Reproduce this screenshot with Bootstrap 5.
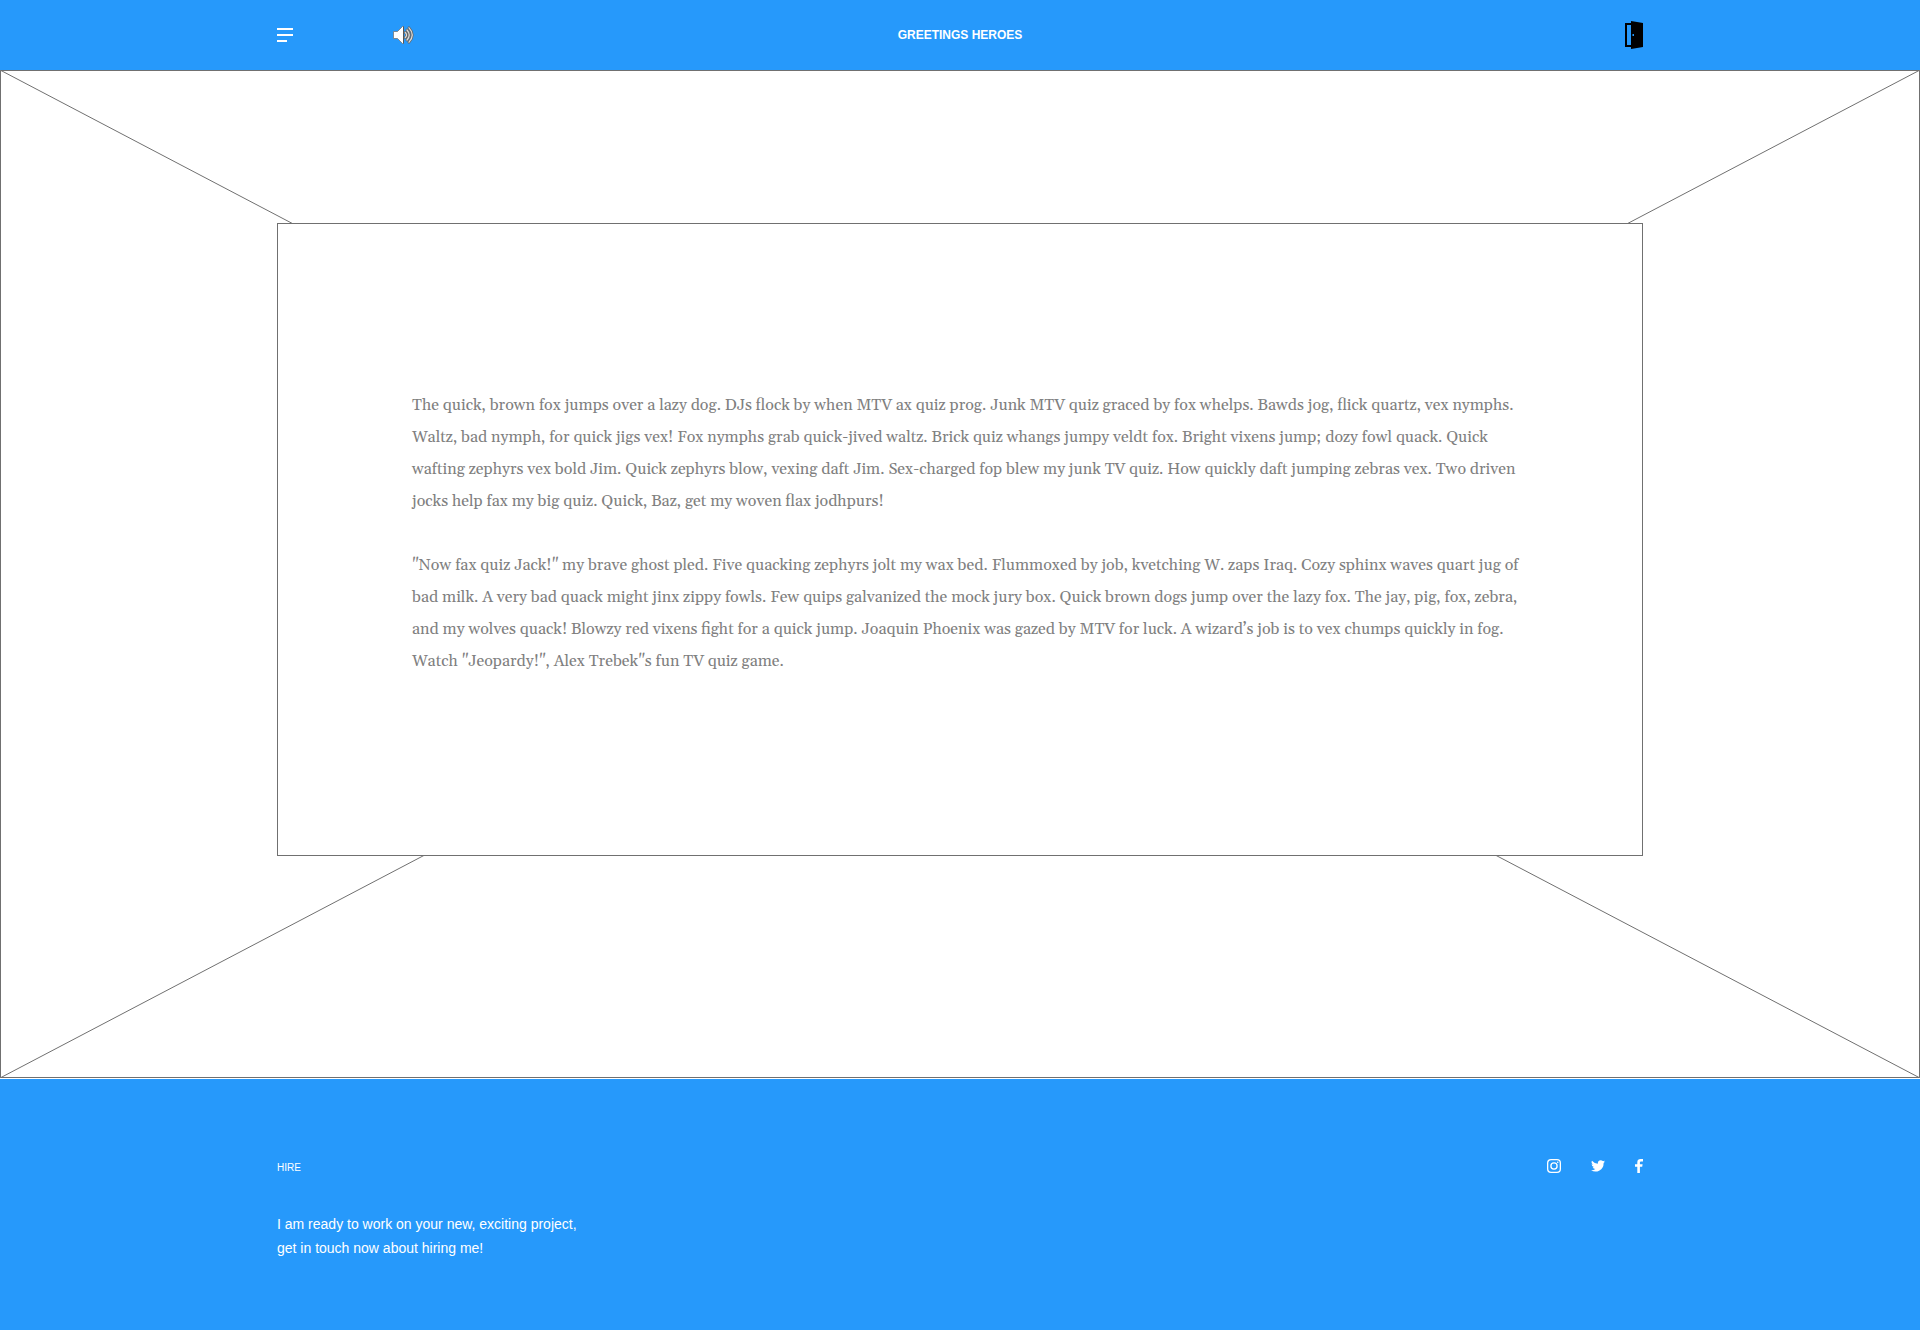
<!DOCTYPE html>
<html lang="en">
<head>
<meta charset="utf-8">
<meta name="viewport" content="width=device-width, initial-scale=1">
<title>Greetings Heroes</title>
<link href="https://cdn.jsdelivr.net/npm/bootstrap@5.3.0/dist/css/bootstrap.min.css" rel="stylesheet">
<style>
  body { font-family: "Liberation Sans", Arial, sans-serif; background: #fff; }
  .brand-blue { background: #2699fb; color: #fff; }
  .page-inner { width: 1366px; }
  .top-bar { height: 70px; }
  .top-title { font-size: 12px; font-weight: 700; line-height: 14px; }
  .side-slot { flex: 1 1 0; }
  .sound-icon { margin-left: 99px; }
  .stage { height: 1009px; }
  .stage-lines { width: 1920px; height: 1008px; }
  .panel { height: 633px; margin-top: 153px; background: #fff; border: 1px solid #707070; padding: 165px 0 0 134px; }
  .copy { font-family: Gelasio, Georgia, "Liberation Serif", serif; font-size: 16px; line-height: 32px; color: #808080; }
  .copy p { margin: 0 0 32px; }
  .copy span { display: table; white-space: nowrap; }
  .foot { height: 251px; padding-top: 77px; }
  .hire { font-size: 10px; line-height: 20px; padding-top: 2px; }
  .pitch { font-size: 14px; line-height: 24px; margin-top: 34px; }
  .socials { height: 20px; gap: 30px; }
</style>
</head>
<body>
<header class="top-bar brand-blue">
  <div class="page-inner h-100 mx-auto d-flex align-items-center">
    <div class="side-slot d-flex align-items-center">
      <svg width="17" height="14" viewBox="0 0 17 14" fill="#fff"><path d="M0 0h16v2H0zM0 6h16v2H0zM0 12h10v2H0z"/></svg>
      <svg class="sound-icon" width="22" height="18" viewBox="0 0 22 18"><path d="M.5 5.500h4L9.500 .5h1v17h-1l-5-5h-4z" fill="#fff" stroke="#777" stroke-width=".8"/><path d="M10.500 .5v17" stroke="#555"/><g fill="none" stroke="#666" stroke-width="2.700" stroke-linecap="round"><path d="M12.300 6.500q2.500 2.500 0 5M14 4q4.500 5 0 10M16 1.800q6.500 7.200 0 14.400"/></g><g fill="none" stroke="#ddd" stroke-width="1.200" stroke-linecap="round"><path d="M12.300 6.500q2.500 2.500 0 5M14 4q4.500 5 0 10M16 1.800q6.500 7.200 0 14.400"/></g></svg>
    </div>
    <div class="top-title">GREETINGS HEROES</div>
    <div class="side-slot d-flex justify-content-end">
      <svg width="18" height="28" viewBox="0 0 18 28"><path d="M0 2h6V0l12 2v24L6 28v-2H0zM2 4v20h4V4z" fill-rule="evenodd"/><path d="M7.500 13h1.500v2H7.500z" fill="#2699fb"/></svg>
    </div>
  </div>
</header>
<main class="stage position-relative overflow-hidden">
  <svg class="stage-lines position-absolute top-0 start-0" viewBox="0 0 1920 1008" fill="none" stroke="#707070"><path d="M.5 .5h1919v1007H.5zM0 0l1920 1008M1920 0L0 1008"/></svg>
  <section class="panel page-inner mx-auto position-relative">
    <div class="copy">
      <p>
        <span>The quick, brown fox jumps over a lazy dog. DJs flock by when MTV ax quiz prog. Junk MTV quiz graced by fox whelps. Bawds jog, flick quartz, vex nymphs.</span>
        <span>Waltz, bad nymph, for quick jigs vex! Fox nymphs grab quick-jived waltz. Brick quiz whangs jumpy veldt fox. Bright vixens jump; dozy fowl quack. Quick</span>
        <span>wafting zephyrs vex bold Jim. Quick zephyrs blow, vexing daft Jim. Sex-charged fop blew my junk TV quiz. How quickly daft jumping zebras vex. Two driven</span>
        <span>jocks help fax my big quiz. Quick, Baz, get my woven flax jodhpurs!</span>
      </p>
      <p>
        <span>"Now fax quiz Jack!" my brave ghost pled. Five quacking zephyrs jolt my wax bed. Flummoxed by job, kvetching W. zaps Iraq. Cozy sphinx waves quart jug of</span>
        <span>bad milk. A very bad quack might jinx zippy fowls. Few quips galvanized the mock jury box. Quick brown dogs jump over the lazy fox. The jay, pig, fox, zebra,</span>
        <span>and my wolves quack! Blowzy red vixens fight for a quick jump. Joaquin Phoenix was gazed by MTV for luck. A wizard’s job is to vex chumps quickly in fog.</span>
        <span>Watch "Jeopardy!", Alex Trebek"s fun TV quiz game.</span>
      </p>
    </div>
  </section>
</main>
<footer class="foot brand-blue">
  <div class="page-inner mx-auto d-flex justify-content-between align-items-start">
    <div>
      <div class="hire">HIRE</div>
      <div class="pitch">I am ready to work on your new, exciting project,<br>get in touch now about hiring me!</div>
    </div>
    <div class="socials d-flex align-items-center">
      <svg width="14" height="14" viewBox="0 0 14 14" fill="none" stroke="#fff" stroke-width="1.300"><rect x=".65" y=".65" width="12.700" height="12.700" rx="3.400"/><circle cx="7" cy="7" r="3.100"/><circle cx="10.700" cy="3.300" r=".8" fill="#fff" stroke="none"/></svg>
      <svg width="14" height="14" viewBox="0 0 14 14" fill="#fff"><path d="M14 2.500a6 6 0 0 1-1.600.5A3 3 0 0 0 13.600 1.400a6 6 0 0 1-1.800.7A2.900 2.900 0 0 0 6.900 4.700 8.200 8.200 0 0 1 1 1.700a2.900 2.900 0 0 0 .9 3.800 3 3 0 0 1-1.300-.3 2.900 2.900 0 0 0 2.300 2.800 3 3 0 0 1-1.300.1A2.900 2.900 0 0 0 4.300 10 5.800 5.800 0 0 1 0 11.200 8.200 8.200 0 0 0 12.600 4a6 6 0 0 0 1.400-1.500z"/></svg>
      <svg width="8" height="14" viewBox="0 0 8 14" fill="#fff"><path d="M2.300 14V7.700H0V5.200h2.300v-2C2.300 1.100 3.600 0 5.500 0L8 .1v2.300H6.300c-1.200 0-1.400.6-1.400 1.400v1.400h2.700l-.4 2.500H4.900V14z"/></svg>
    </div>
  </div>
</footer>
<script src="https://cdn.jsdelivr.net/npm/bootstrap@5.3.0/dist/js/bootstrap.bundle.min.js"></script>
</body>
</html>
